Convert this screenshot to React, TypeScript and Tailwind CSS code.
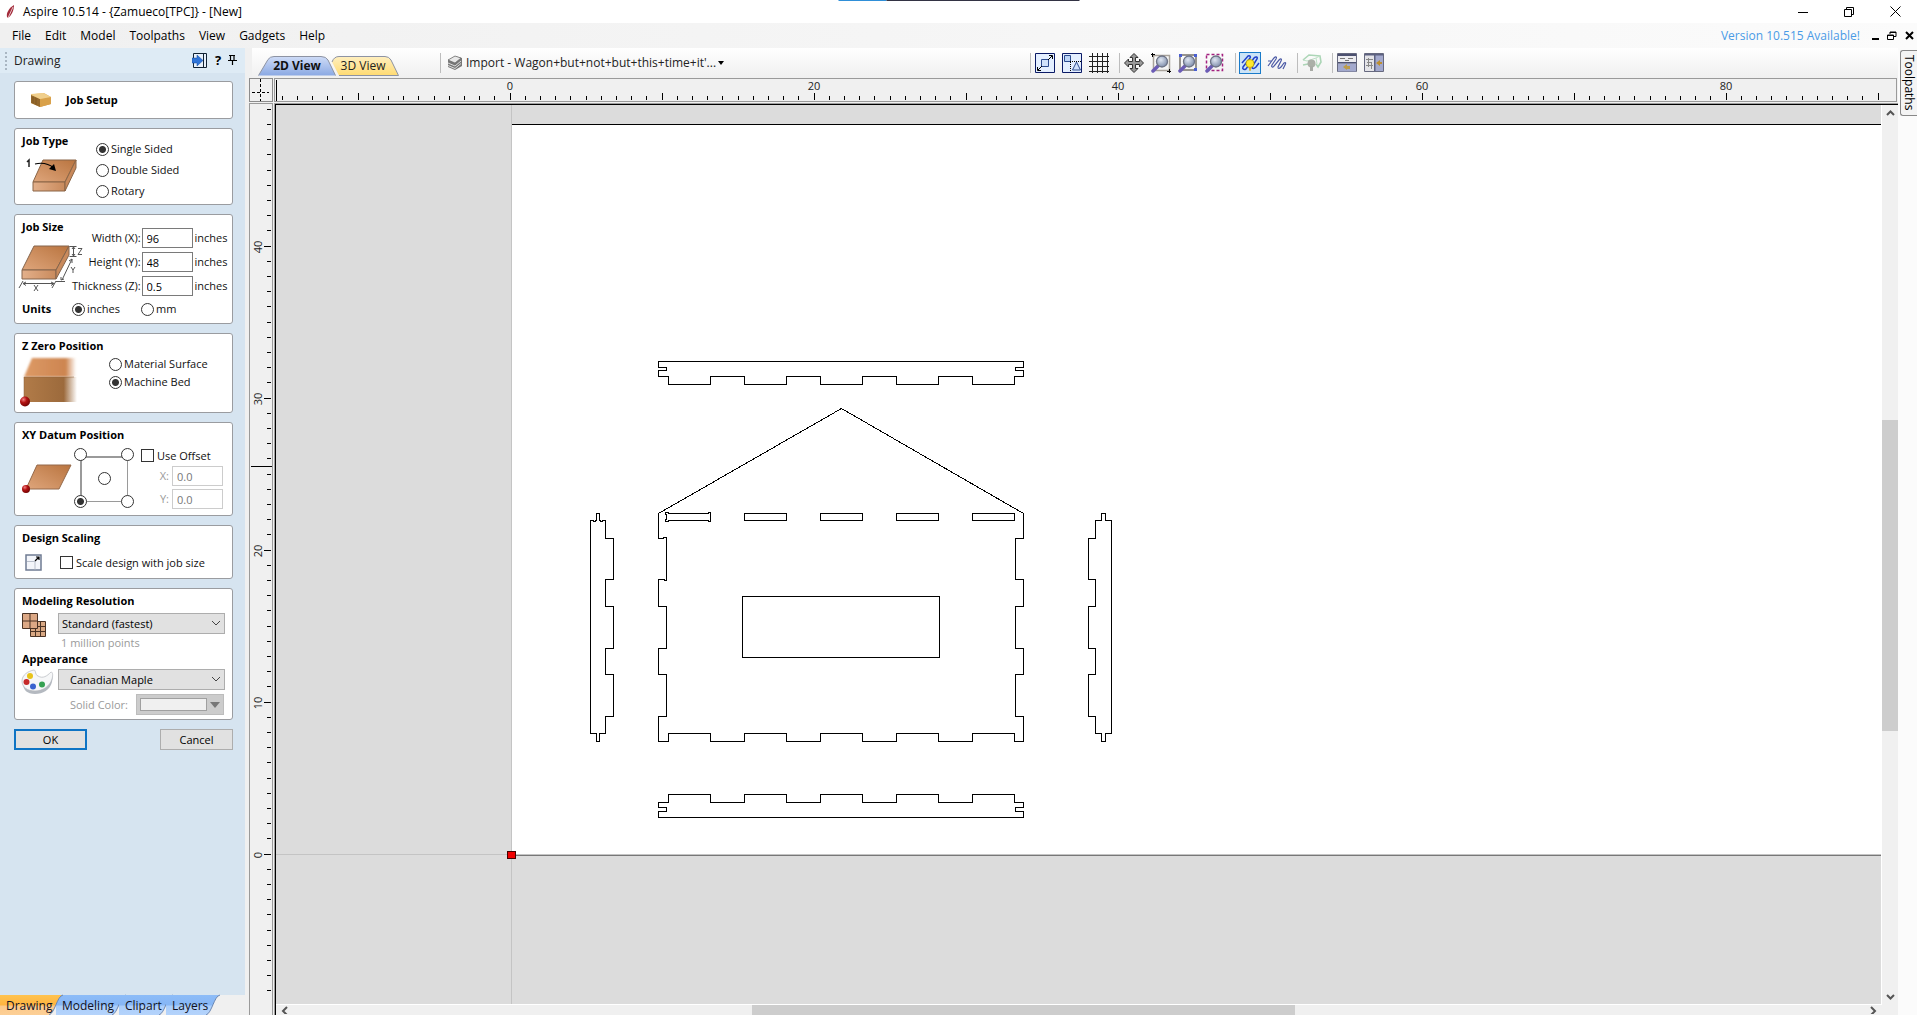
import { useState } from "react";
import type { ReactNode } from "react";

const UNIT = 15.2;
const ORIGIN_X = 236;
const ORIGIN_Y = 751;

/* ---------- small form parts ---------- */

const radioClass =
  "m-0 block size-[13px] shrink-0 appearance-none rounded-full border border-[#333] bg-white checked:bg-[radial-gradient(circle,#333_3px,transparent_4px)]";
const checkClass =
  "m-0 block size-[13px] shrink-0 appearance-none border border-[#333] bg-white checked:bg-[#333]";

function Radio({ name, label, value, group, onPick }: { name: string; label: string; value: string; group: string; onPick: (v: string) => void }) {
  return (
    <label className="flex items-center gap-0.5 whitespace-nowrap">
      <input type="radio" name={name} checked={group === value} onChange={() => onPick(value)} className={radioClass} />
      {label}
    </label>
  );
}

function Card({ className, children }: { className: string; children: ReactNode }) {
  return <section className={"rounded-[3px] border border-[#9a9ca0] bg-white px-[7px] " + className}>{children}</section>;
}

function Title({ children }: { children: ReactNode }) {
  return <h2 className="whitespace-nowrap text-[11px] leading-4 font-bold text-black">{children}</h2>;
}

function SizeRow({ label, value }: { label: string; value: string }) {
  const [v, setV] = useState(value);
  return (
    <div className="flex items-center justify-end">
      <label className="flex items-center gap-px whitespace-nowrap">
        {label}
        <input value={v} onChange={(e) => setV(e.target.value)} className="h-5 w-[51px] border border-[#7a7a7a] bg-white px-1 text-black" />
      </label>
      <span className="ml-0.5 w-8">inches</span>
    </div>
  );
}

function Picker({ label, option, indent }: { label: string; option: string; indent?: boolean }) {
  return (
    <div className="relative flex-1">
      <select aria-label={label} className={"block h-[21px] w-full appearance-none border border-[#adadad] bg-[#e1e1e1] text-black " + (indent ? "pl-[11px]" : "pl-[3px]")}>
        <option>{option}</option>
      </select>
      <svg className="pointer-events-none absolute top-[7px] right-[4px]" width="10" height="7" fill="none" stroke="#444">
        <path d="M1 1l4 4 4-4" />
      </svg>
    </div>
  );
}

/* ---------- panel drawings ---------- */

function WoodDefs() {
  return (
    <svg width="0" height="0" className="absolute">
      <defs>
        <linearGradient id="wood" x1="0" y1="1" x2="1" y2="0">
          <stop offset="0" stopColor="#dfa67c" />
          <stop offset="1" stopColor="#b9743f" />
        </linearGradient>
        <linearGradient id="woodFront">
          <stop offset="0" stopColor="#e3b08b" />
          <stop offset="1" stopColor="#c98a5c" />
        </linearGradient>
        <linearGradient id="beech">
          <stop offset="0" stopColor="#b17b48" />
          <stop offset="0.75" stopColor="#9c6a3c" />
          <stop offset="1" stopColor="#9c6a3c" stopOpacity="0" />
        </linearGradient>
        <linearGradient id="beechTop">
          <stop offset="0" stopColor="#dd9a66" />
          <stop offset="0.8" stopColor="#cd8550" />
          <stop offset="1" stopColor="#cd8550" stopOpacity="0" />
        </linearGradient>
        <radialGradient id="ball" cx="0.35" cy="0.3" r="0.8">
          <stop offset="0" stopColor="#f08080" />
          <stop offset="0.4" stopColor="#b31212" />
          <stop offset="1" stopColor="#600" />
        </radialGradient>
        <linearGradient id="plank" x1="0" y1="0" x2="1" y2="1">
          <stop offset="0" stopColor="#f2cd83" />
          <stop offset="1" stopColor="#cd8f35" />
        </linearGradient>
        <radialGradient id="lens" cx="0.4" cy="0.35" r="0.7">
          <stop offset="0" stopColor="#dfe6f2" />
          <stop offset="1" stopColor="#7b8aa8" />
        </radialGradient>
      </defs>
    </svg>
  );
}

function JobSetupIcon() {
  return (
    <svg width="22" height="16">
      <path d="M1 2l13-1 7 4v7l-11 3-9-4z" fill="url(#plank)" />
      <path d="M1 3l9 4v8l-9-4z" fill="#94682c" />
      <path d="M3 5v6M6 6v7" stroke="#7a5420" strokeWidth="0.700" />
      <path d="M10 7l11-2v7l-11 3z" fill="#d9a14a" />
      <path d="M1 2.500L13 1l8 4-11 2z" fill="#f0cf8c" />
    </svg>
  );
}

function JobTypeIcon() {
  return (
    <svg width="54" height="36">
      <path d="M17 3h33L39 25H7z" fill="url(#wood)" stroke="#8a6546" />
      <path d="M7 25h32v9H7z" fill="url(#woodFront)" stroke="#8a6546" />
      <path d="M50 3v8L39 34v-9z" fill="#c9895b" stroke="#8a6546" />
      <path d="M9 7c8-2 14 0 19 4" fill="none" stroke="#000" strokeWidth="1.2" />
      <path d="M30 14l-7-2 5-5z" fill="#000" />
      <path d="M1 5l2-2v7" fill="none" stroke="#222" strokeWidth="1.500" />
    </svg>
  );
}

function JobSizeIcon() {
  return (
    <svg width="66" height="50" className="-ml-[3px] max-w-none overflow-visible">
      <path d="M15 3h35L37 27H3z" fill="url(#wood)" stroke="#85654c" />
      <path d="M3 27h34v9H3z" fill="url(#woodFront)" stroke="#85654c" />
      <path d="M50 3v9L37 36v-9z" fill="#c98a5c" stroke="#85654c" />
      <g stroke="#555" fill="none">
        <path d="M50.500 3.500h7M50.500 13.500h7M54.500 4v9M53 6l1.500-2 1.500 2M53 11l1.500 2 1.500-2" />
        <path d="M53 16L43 37M50 18l3-2v4M42 34v3l3-1M37 38.500h9" />
        <path d="M4 40.500h31M7 39l-3 1.500 3 2M32 39l3 1.500-3 2M4 38l-4 7M37 38l-4 7" />
        <path d="M59 5.500h4l-4 6h4M52 24l2 3 2-3M54 27v3M15 42l4 6M19 42l-4 6" />
      </g>
    </svg>
  );
}

function ZZeroIcon() {
  return (
    <svg width="60" height="54" className="-ml-[2px]">
      <defs>
        <filter id="soft" x="-10%" y="-20%" width="120%" height="140%">
          <feGaussianBlur stdDeviation="1" />
        </filter>
      </defs>
      <path d="M12 4h44v19H4z" fill="url(#beechTop)" filter="url(#soft)" />
      <path d="M4 23h53v25H4z" fill="url(#beech)" />
      <path d="M4 48V23h50" fill="none" stroke="#8b6038" strokeOpacity="0.5" />
      <circle cx="5" cy="47.500" r="5" fill="url(#ball)" />
    </svg>
  );
}

function DatumIcon() {
  return (
    <svg width="52" height="32">
      <path d="M15 3h34L37 27H4z" fill="url(#wood)" stroke="#94694a" />
      <circle cx="4" cy="27" r="4" fill="url(#ball)" />
    </svg>
  );
}

function ScalingIcon() {
  return (
    <svg width="17" height="17" fill="none">
      <path d="M1 1h15v15H1z" fill="#f3f5fa" stroke="#6f7b92" strokeWidth="1.500" />
      <path d="M2 7.500h8v8" stroke="#b9bfcb" />
      <path d="M10 7l4-4M11 3h3v3" stroke="#000" strokeWidth="1.200" />
    </svg>
  );
}

function ResolutionIcon() {
  return (
    <svg width="26" height="26" stroke="#4a3325">
      <path d="M8.500 8.500h15v15h-15z" fill="#d9a883" />
      <path d="M13.500 8v15M18.500 8v15M8 13.500h15M8 18.500h15" />
      <path d="M.5.5h15v15H.5z" fill="#dca885" />
      <path d="M8 .5v15M.5 8h15" />
    </svg>
  );
}

function PaletteIcon() {
  return (
    <svg width="33" height="26" className="-ml-px">
      <path d="M2 14C2 7 8 3 13 2c2 0 1 5 4 7 5 3 9-1 12-4 3-1 3 4 2 8-2 8-9 12-17 12S2 21 2 14z" fill="#b4b9c0" />
      <path d="M1 12C1 6 7 2 13 1c2 0 1 5 4 6 5 3 9 0 13-4 2 0 2 4 1 7-2 7-9 12-17 12S1 18 1 12z" fill="#f6f7f8" stroke="#b4b8bd" strokeWidth="0.700" />
      <circle cx="9" cy="7" r="3" fill="#e8c31a" />
      <circle cx="5.500" cy="13" r="3" fill="#c62a2a" />
      <circle cx="12" cy="17.500" r="3" fill="#3a63cf" />
      <circle cx="21" cy="15.500" r="3" fill="#35a152" />
    </svg>
  );
}

/* ---------- toolbar drawings ---------- */

function Magnifier() {
  return (
    <g>
      <path d="M8 12l-6 6" stroke="#6b5cb5" strokeWidth="3.500" strokeLinecap="round" />
      <circle cx="11" cy="8.500" r="5.500" fill="url(#lens)" stroke="#6d7385" strokeWidth="1.300" />
    </g>
  );
}

const toolIcons: Record<string, ReactNode> = {
  "Snap to objects": (
    <g fill="none">
      <path d="M.5.5h19v19H.5z" fill="#e4efff" stroke="#0a1a66" />
      <path d="M6.500 6.500h7v7h-7z" fill="#d0e2fb" stroke="#2c4c8f" />
      <path d="M13 7l4-4M14 2.500h3.500V6M7 13l-4 4M2.500 14v3.500H6" stroke="#000" />
    </g>
  ),
  "Smart snapping": (
    <g fill="none">
      <path d="M.5.5h19v19H.5z" fill="#e4efff" stroke="#0a1a66" />
      <path d="M2.500 2.500h6v6h-6z" fill="#bcd4f6" stroke="#2c4c8f" />
      <path d="M14.500 9l-4 8h8z" fill="#cfe0fa" stroke="#2c4c8f" />
      <path d="M8 8.500h11M8.500 9v10" stroke="#000" strokeDasharray="1 1" />
    </g>
  ),
  "Grid": <path d="M3.500 0v20M8.500 0v20M13.500 0v20M18.500 0v20M0 3.500h20M0 8.500h20M0 13.500h20M0 18.500h20" stroke="#222" />,
  "Pan": (
    <path d="M10 .5l4 4h-2.500v4h4V6l4 4-4 4v-2.500h-4v4H14l-4 4-4-4h2.500v-4h-4V14l-4-4 4-4v2.500h4v-4H6z" fill="#999" stroke="#333" />
  ),
  "Zoom box": (
    <g>
      <path d="M2.500 2.500h16v15h-16z" fill="none" stroke="#a8a29a" strokeWidth="1.500" />
      <Magnifier />
      <path d="M0 1.500h4M1.500 0v4M16 18.500h4M18.500 16v4" stroke="#000" />
    </g>
  ),
  "Zoom to drawing": (
    <g>
      <path d="M2 2h16v15H2z" fill="none" stroke="#77736c" strokeWidth="1.500" />
      <path d="M1 1h3v3H1zM16 1h3v3h-3zM16 15h3v3h-3z" fill="#4a5fd0" />
      <Magnifier />
    </g>
  ),
  "Zoom to selection": (
    <g>
      <path d="M1.500 1.500h16v16h-16z" fill="none" stroke="#a3217f" strokeWidth="1.500" strokeDasharray="3 2" />
      <Magnifier />
    </g>
  ),
  "Highlight toolpaths": (
    <g>
      <path d="M2 10L8 3c2-1 3 1 2 2L3 14c-1 2 1 3 3 2L14 5c2-2 4-1 3 1l-5 8c0 2 2 2 4 0l3-4" fill="none" stroke="#1f3fc9" strokeWidth="1.500" />
      <circle cx="10" cy="10.500" r="4" fill="#ffe92e" stroke="#b8a100" strokeWidth="0.800" />
      <path d="M8.500 14h3l-1 4h-1z" fill="#d8a825" />
    </g>
  ),
  "Show toolpaths": (
    <path d="M1 8h4M1 13l6-8c2-2 3-1 2 1l-4 6c-1 2 1 3 2 1l5-6c2-2 3-1 2 1l-3 6c0 2 1 2 3 0l3-4c2-1 2 0 1 2l-2 4" fill="none" stroke="#4b5aa6" strokeWidth="1.200" />
  ),
  "Toggle bulb": (
    <g fill="none" opacity="0.700">
      <path d="M1 7l6-5 11 1 1 6-3 5-2-3M6 11l-5 1z" stroke="#8cc79b" strokeWidth="1.600" />
      <path d="M1 7l4 1 9-3 4-2M14 5l1 6" stroke="#a6d6b1" />
      <circle cx="9.500" cy="10.500" r="4" fill="#8d9388" />
      <path d="M8 13h3v5H8z" fill="#888c84" />
    </g>
  ),
  "Split horizontally": (
    <g fill="none">
      <path d="M.5.5h19v18H.5z" fill="#ececf0" stroke="#66697f" />
      <path d="M1 10.500h18v8H1z" fill="#a3a9cd" />
      <path d="M1 1h18v2H1zM1 9h18v1.500H1z" fill="#4c5170" />
      <path d="M3 5.500h5M11 5.500h5M8 7.500h4" stroke="#777" />
      <path d="M6 14l4-3v2h3v3h-3v1z" fill="#bd9c48" />
    </g>
  ),
  "Split vertically": (
    <g fill="none">
      <path d="M.5.5h19v18H.5z" fill="#e4e4e8" stroke="#66697f" />
      <path d="M11 1h8v17h-8z" fill="#a3a9cd" />
      <path d="M1 1h18v1.500H1zM10 1h1.500v17H10z" fill="#5c6180" />
      <path d="M2 6.500h7M3 9.500h5M2 12.500h7M4.500 5v9M7.500 9v7" stroke="#888" />
      <path d="M12 10l4-3v2h2v2h-2v2z" fill="#bd8f30" />
    </g>
  ),
};

const toolGroups = [
  ["Snap to objects", "Smart snapping", "Grid"],
  ["Pan", "Zoom box", "Zoom to drawing", "Zoom to selection"],
  ["Highlight toolpaths", "Show toolpaths"],
  ["Toggle bulb"],
  ["Split horizontally", "Split vertically"],
];

function Tools() {
  return (
    <div className="flex items-center">
      {toolGroups.map((group, i) => (
        <div key={i} className="flex items-center gap-[7px] border-l border-[#bdbdbd] pr-2.5 pl-1">
          {group.map((name) => (
            <button
              key={name}
              aria-label={name}
              title={name}
              className={
                "flex size-5 items-center justify-center " +
                (name === "Highlight toolpaths" ? "bg-[#cce4f7] outline outline-[#1a7bc9]" : "")
              }
            >
              <svg width="20" height="20">{toolIcons[name]}</svg>
            </button>
          ))}
        </div>
      ))}
    </div>
  );
}

/* ---------- rulers ---------- */

function range(from: number, to: number) {
  return Array.from({ length: to - from + 1 }, (_, i) => from + i);
}

function TopRuler() {
  return (
    <svg className="block size-full" shapeRendering="crispEdges">
      <path d="M1.500 1v21" stroke="#000" />
      {range(-15, 90).map((n) => {
        const x = Math.floor(ORIGIN_X - 1 + n * UNIT) + 0.5;
        return <path key={n} d={`M${x} ${n % 10 === 0 ? 14 : 17}V21`} stroke="#000" />;
      })}
      {[0, 20, 40, 60, 80].map((n) => (
        <text key={n} x={ORIGIN_X - 1 + n * UNIT} y="11" textAnchor="middle" fontSize="11" fill="#222">{n}</text>
      ))}
    </svg>
  );
}

function SideRuler() {
  return (
    <svg className="block size-full" shapeRendering="crispEdges">
      {range(-9, 49).map((n) => {
        const y = Math.floor(ORIGIN_Y - n * UNIT) - 0.5;
        return <path key={n} d={`M${n % 10 === 0 ? 14 : 17} ${y}H21`} stroke="#000" />;
      })}
      <path d="M1 362.500h22" stroke="#000" />
      {[0, 10, 20, 30, 40].map((n) => {
        const y = ORIGIN_Y - n * UNIT;
        return (
          <text key={n} x="12" y={y} transform={`rotate(-90 12 ${y})`} textAnchor="middle" fontSize="11" fill="#222">{n}</text>
        );
      })}
    </svg>
  );
}

/* ---------- drawing area; paths are in window pixels ---------- */

const topBar =
  "M658 361H1023V367H1015V370H1023V376H1014V384H972V376H938V384H896V376H862V384H820V376H786V384H744V376H710V384H668V376H658V370H666V367H658Z";
const house =
  "M841 408L1023 513V538H1015V579H1023V606H1015V648H1023V674H1015V716H1023V741H1014V733H972V741H938V733H896V741H862V733H820V741H786V733H744V741H710V733H668V741H658V716H666V674H658V648H666V606H658V579H664V580H666V537H663V538H658V513Z";
const bottomBar =
  "M658 817H1023V811H1015V807H1023V802H1014V794H972V802H938V794H896V802H862V794H820V802H786V794H744V802H710V794H668V802H658V807H666V811H658Z";
const leftSide =
  "M590 520H593V521H595V520H596V513H599V520H600V521H602V520H605V538H613V579H605V606H613V648H605V674H613V716H605V733H599V741H596V733H590Z";
const rightSide =
  "M1111 520H1105V513H1101V520H1095V538H1088V579H1095V606H1088V648H1095V674H1088V716H1095V733H1101V741H1105V733H1111Z";

function Artboard() {
  return (
    <svg className="block size-full bg-[#dcdcdc]" fill="none" stroke="#000">
      <g transform="translate(-275.500 -104.500)" shapeRendering="crispEdges">
        <path d="M511 124H4000V855H511z" fill="#fff" stroke="none" />
        <path d="M511 100V1400M270 854H4000" stroke="#c4c4c4" />
        <path d="M511 124H4000" />
        <path d="M511 855H4000" stroke="#777" />
        <path d={topBar} />
        <path d={house} />
        <path d={bottomBar} />
        <path d={leftSide} />
        <path d={rightSide} />
        <path d="M742 596H939V657H742Z" />
        <path d="M665 514V512H668V513H708V512H710V521H708V520H668V521H665V519H666V514Z" />
        <path d="M744 513H786V520H744ZM820 513H862V520H820ZM896 513H938V520H896ZM972 513H1014V520H972Z" />
        <path d="M507 851h8v7h-8z" fill="#f00000" stroke="#400" />
      </g>
    </svg>
  );
}

function Chevron({ d }: { d: string }) {
  return (
    <svg className="shrink-0" width="9" height="9" fill="none" stroke="#555" strokeWidth="2">
      <path d={d} />
    </svg>
  );
}

/* ---------- left panel ---------- */

function JobPanel() {
  const [side, setSide] = useState("single");
  const [units, setUnits] = useState("inches");
  const [zero, setZero] = useState("bed");
  const [datum, setDatum] = useState("bl");
  const corner = (v: string, label: string, place: string) => (
    <input type="radio" name="datum" aria-label={label} checked={datum === v} onChange={() => setDatum(v)} className={radioClass + " " + place} />
  );
  return (
    <form onSubmit={(e) => e.preventDefault()} className="flex flex-col gap-[9px] pt-2 pr-3 pl-3.5 text-[11px] leading-4 text-[#111]">
      <Card className="flex h-[38px] items-center">
        <span className="ml-2"><JobSetupIcon /></span>
        <h1 className="ml-3.5 text-[11px] font-bold text-black">Job Setup</h1>
      </Card>

      <Card className="flex h-[77px]">
        <div className="w-[74px] pt-1">
          <Title>Job Type</Title>
          <div className="mt-2 ml-1"><JobTypeIcon /></div>
        </div>
        <div className="grid content-start gap-[5px] pt-3">
          <Radio name="side" label="Single Sided" value="single" group={side} onPick={setSide} />
          <Radio name="side" label="Double Sided" value="double" group={side} onPick={setSide} />
          <Radio name="side" label="Rotary" value="rotary" group={side} onPick={setSide} />
        </div>
      </Card>

      <Card className="h-[110px]">
        <div className="flex">
          <div className="w-[50px] shrink-0 pt-1">
            <Title>Job Size</Title>
            <div className="mt-2"><JobSizeIcon /></div>
          </div>
          <div className="flex flex-1 flex-col gap-1 pt-[13px]">
            <SizeRow label="Width (X):" value="96" />
            <SizeRow label="Height (Y):" value="48" />
            <SizeRow label="Thickness (Z):" value="0.5" />
          </div>
        </div>
        <div className="mt-1 flex h-[18px] items-center">
          <div className="w-[50px]"><Title>Units</Title></div>
          <div className="w-[69px]"><Radio name="units" label="inches" value="inches" group={units} onPick={setUnits} /></div>
          <Radio name="units" label="mm" value="mm" group={units} onPick={setUnits} />
        </div>
      </Card>

      <Card className="h-20 pt-1">
        <Title>Z Zero Position</Title>
        <div className="flex">
          <div className="w-[87px]"><ZZeroIcon /></div>
          <div className="grid content-start gap-0.5 pt-0.5">
            <Radio name="zero" label="Material Surface" value="surface" group={zero} onPick={setZero} />
            <Radio name="zero" label="Machine Bed" value="bed" group={zero} onPick={setZero} />
          </div>
        </div>
      </Card>

      <Card className="h-[94px] pt-1">
        <Title>XY Datum Position</Title>
        <div className="mt-[5px] flex">
          <div className="w-[52px] pt-3.5"><DatumIcon /></div>
          <div className="relative h-[60px] w-[60px]">
            <svg className="absolute inset-0" width="60" height="60" fill="none" stroke="#9a9a9a">
              <path d="M7 9h46M7 9v44" strokeWidth="2" />
              <path d="M53.500 9v44.500H7" />
            </svg>
            <div className="relative grid h-[60px] w-[60px] grid-cols-3 grid-rows-3">
              {corner("tl", "Top left", "col-start-1 row-start-1")}
              {corner("tr", "Top right", "col-start-3 row-start-1 justify-self-end")}
              {corner("c", "Centre", "col-start-2 row-start-2 place-self-center")}
              {corner("bl", "Bottom left", "col-start-1 row-start-3 self-end")}
              {corner("br", "Bottom right", "col-start-3 row-start-3 place-self-end")}
            </div>
          </div>
          <div className="ml-[7px] flex-1">
            <label className="flex h-[15px] items-center gap-[3px] whitespace-nowrap">
              <input type="checkbox" className={checkClass} />
              Use Offset
            </label>
            <label className="mt-[3px] flex items-center justify-end gap-[3px] pr-0.5 text-[#9a9a9a]">
              X:
              <input disabled defaultValue="0.0" className="h-5 w-[51px] border border-[#ccc] px-1 text-[#777]" />
            </label>
            <label className="mt-[3px] flex items-center justify-end gap-[3px] pr-0.5 text-[#9a9a9a]">
              Y:
              <input disabled defaultValue="0.0" className="h-5 w-[51px] border border-[#ccc] px-1 text-[#777]" />
            </label>
          </div>
        </div>
      </Card>

      <Card className="h-[54px] pt-1">
        <Title>Design Scaling</Title>
        <div className="mt-2 ml-[3px] flex items-center">
          <ScalingIcon />
          <label className="ml-[18px] flex items-center gap-[3px] whitespace-nowrap">
            <input type="checkbox" className={checkClass} />
            Scale design with job size
          </label>
        </div>
      </Card>

      <Card className="h-[132px] pt-1">
        <Title>Modeling Resolution</Title>
        <div className="mt-1 flex h-[21px]">
          <div className="w-9 shrink-0"><ResolutionIcon /></div>
          <Picker label="Modeling resolution" option="Standard (fastest)" />
        </div>
        <p className="mt-px ml-[39px] text-[#9a9a9a]">1 million points</p>
        <Title>Appearance</Title>
        <div className="mt-0.5 flex h-[21px]">
          <div className="w-9 shrink-0"><PaletteIcon /></div>
          <Picker label="Appearance" option="Canadian Maple" indent />
        </div>
        <div className="mt-1 flex items-center justify-end gap-2 pr-px text-[#9a9a9a]">
          <span>Solid Color:</span>
          <button type="button" disabled aria-label="Solid color" className="flex h-[21px] w-[88px] items-center justify-between border border-[#bdbdbd] bg-[#ccc] px-[3px]">
            <span className="h-[13px] w-[67px] border border-[#a0a0a0] bg-[#f0f0f0]" />
            <svg width="10" height="6"><path d="M0 0h10l-5 6z" fill="#777" /></svg>
          </button>
        </div>
      </Card>

      <div className="flex justify-between text-black">
        <button type="submit" className="h-[21px] w-[73px] border-2 border-[#0f74c4] bg-[#e1e1e1] leading-none">OK</button>
        <button type="button" className="h-[21px] w-[73px] border border-[#adadad] bg-[#e1e1e1] leading-none">Cancel</button>
      </div>
    </form>
  );
}

const bottomTabs = [
  { name: "Drawing", cls: "w-[56px] pl-1.5", w: 63, on: true },
  { name: "Modeling", cls: "w-[63px] pl-1.5", w: 70, on: false },
  { name: "Clipart", cls: "w-[47px] pl-1.5", w: 54, on: false },
  { name: "Layers", cls: "w-[54px] pl-1.5", w: 54, on: false },
];

function BottomTabs() {
  return (
    <div className="flex h-5 shrink-0 bg-[#f0f0f0] text-xs">
      {bottomTabs.map((t) => (
        <button key={t.name} className={"relative pt-0.5 text-left whitespace-nowrap text-[#112] " + t.cls + (t.on ? " z-10" : "")}>
          <svg className="absolute top-0 left-0 max-w-none overflow-visible" width={t.w} height="20">
            <defs>
              <linearGradient id={"tab" + t.name} x1="0" y1="0" x2="0" y2="1">
                <stop offset="0" stopColor={t.on ? "#ffc34f" : "#8dbcf8"} />
                <stop offset="0.5" stopColor={t.on ? "#ffb440" : "#86b6f5"} />
                <stop offset="0.550" stopColor={t.on ? "#fdc98a" : "#abcefb"} />
                <stop offset="1" stopColor={t.on ? "#fccf96" : "#b4d3fb"} />
              </linearGradient>
            </defs>
            <path d={`M0 0H${t.w}C${t.w - 6} 1 ${t.w - 8} 18 ${t.w - 14} 20H0z`} fill={`url(#tab${t.name})`} />
            <path d={`M${t.w} 0C${t.w - 6} 1 ${t.w - 8} 18 ${t.w - 14} 20`} fill="none" stroke="#6b87b3" />
          </svg>
          <span className="relative">{t.name}</span>
        </button>
      ))}
    </div>
  );
}

function ViewTab({ label, active }: { label: string; active?: boolean }) {
  return (
    <button className={"relative h-5 text-xs " + (active ? "z-10 w-[78px] font-bold text-[#111]" : "-ml-[5px] w-[68px] pr-1 text-[#222]")}>
      <svg className="absolute inset-0" width="100%" height="20" viewBox={active ? "0 0 78 20" : "0 0 68 20"}>
        <defs>
          <linearGradient id={active ? "blueTab" : "goldTab"} x1="0" y1="0" x2="0" y2="1">
            <stop offset="0" stopColor={active ? "#cfdcf7" : "#ffefc0"} />
            <stop offset="1" stopColor={active ? "#8ba9e3" : "#ffdb72"} />
          </linearGradient>
        </defs>
        <path
          d={active ? "M.5 19.500L10 3.500Q12 .5 16 .5H63Q68 .5 70 4L77.500 19.500" : "M1 6Q3 .5 8 .5H54Q58 .5 60 4L67.500 19.500H8"}
          fill={active ? "url(#blueTab)" : "url(#goldTab)"}
          stroke="#8d93a3"
        />
      </svg>
      <span className="relative">{label}</span>
    </button>
  );
}

export default function App() {
  return (
    <div className="flex h-screen flex-col overflow-hidden bg-[#f0f0f0] font-['Open_Sans','Noto_Sans',sans-serif] text-black">
      <WoodDefs />
      <header className="relative flex h-[23px] shrink-0 items-center bg-white pr-4 pl-[6px] text-xs">
        <div className="absolute top-0 left-1/2 flex h-px w-[241px] -translate-x-1/2">
          <span className="w-12 bg-[#2f8fd8]" />
          <span className="flex-1 bg-[#334]" />
        </div>
        <svg width="9" height="14"><path d="M8 0C3 3 0 8 1 12l1 1C5 11 8 6 8 0z" fill="#a32a3a" /><path d="M7 2L2 13" stroke="#fff" strokeWidth="0.700" /></svg>
        <span className="ml-2 whitespace-nowrap">Aspire 10.514 - {"{Zamueco[TPC]}"} - [New]</span>
        <div className="ml-auto flex items-center gap-9">
          <button aria-label="Minimize"><svg width="10" height="10" stroke="#000"><path d="M0 5.500h10" /></svg></button>
          <button aria-label="Restore"><svg width="10" height="10" fill="none" stroke="#000"><path d="M.5 2.500h7v7h-7zM2.500 2V.5h7v7H8" /></svg></button>
          <button aria-label="Close"><svg width="11" height="11" stroke="#000"><path d="M.5.5l10 10M10.500.5l-10 10" /></svg></button>
        </div>
      </header>

      <nav className="flex h-[25px] shrink-0 items-center bg-linear-to-r from-[#f0f0f0] to-[#fbfbfb] pr-[3px] pl-3 text-xs">
        <div className="flex gap-3.5">
          {["File", "Edit", "Model", "Toolpaths", "View", "Gadgets", "Help"].map((m) => (
            <button key={m}>{m}</button>
          ))}
        </div>
        <a href="#update" className="ml-auto text-[#4a9be6]">Version 10.515 Available!</a>
        <div className="ml-3 flex items-center gap-2">
          <button aria-label="Minimize view"><svg width="7" height="9"><path d="M0 7h7v2H0z" /></svg></button>
          <button aria-label="Restore view"><svg width="10" height="9" fill="none" stroke="#000"><path d="M.5 4h6v4.500h-6zM.5 4.500h6M3 3V1h6v4.500H7M3 1.500h6" /></svg></button>
          <button aria-label="Close view"><svg width="9" height="9" stroke="#000" strokeWidth="2"><path d="M1 1l7 7M8 1L1 8" /></svg></button>
        </div>
      </nav>

      <div className="flex min-h-0 flex-1">
        <aside className="flex w-[245px] shrink-0 flex-col bg-[#d6e4f0]">
          <div className="flex h-[25px] shrink-0 items-center bg-[#deebf5] pr-2 pl-[5px] text-xs text-[#222]">
            <span className="h-[18px] border-l-2 border-dotted border-[#a9b6c2]" />
            <span className="ml-[7px]">Drawing</span>
            <div className="ml-auto flex items-center gap-1">
              <button aria-label="Switch layout">
                <svg width="16" height="15">
                  <path d="M1.500.5h13v14h-13z" fill="#e8f1fb" stroke="#123" />
                  <path d="M11.500 0v15" stroke="#123" />
                  <path d="M0 5h5V2l6 5.500L5 13v-3H0z" fill="#2f74d8" stroke="#174a9a" strokeWidth="0.500" />
                </svg>
              </button>
              <button className="w-3 text-[13px] font-bold text-black">?</button>
              <button aria-label="Pin">
                <svg width="9" height="10" fill="none" stroke="#000"><path d="M2.500 0v5M1 .5h6M6 0v5.500M0 5.500h9M4.500 6v4" strokeWidth="1.200" /></svg>
              </button>
            </div>
          </div>
          <div className="min-h-0 flex-1 overflow-hidden"><JobPanel /></div>
          <BottomTabs />
        </aside>

        <main className="ml-1 flex min-w-0 flex-1 flex-col">
          <div className="ml-[3px] flex h-[30px] shrink-0 items-center bg-linear-to-b from-white to-[#f0f0f0]">
            <div className="ml-1.5 flex self-end pb-0.5">
              <ViewTab label="2D View" active />
              <ViewTab label="3D View" />
            </div>
            <button className="ml-[41px] flex h-5 w-[590px] items-center border-l border-[#bdbdbd] text-xs whitespace-nowrap text-[#222]">
              <svg className="ml-1.5" width="16" height="16">
                <path d="M1 5l7-4 7 2v8l-7 4-7-3z" fill="#777" />
                <path d="M1 5l7-4 6 2-6 5z" fill="#e8e8e8" stroke="#666" strokeWidth="0.700" />
                <path d="M1 8l7 3 6-5M1 10.500l7 3 6-5" fill="none" stroke="#ddd" />
              </svg>
              <span className="ml-[3px]">Import - Wagon+but+not+but+this+time+it'...</span>
              <svg className="ml-0.5" width="6" height="4"><path d="M0 0h6L3 4z" /></svg>
            </button>
            <Tools />
          </div>

          <div className="flex h-6 shrink-0 gap-px pr-px">
            <div className="w-6 shrink-0 border border-[#8c8c8c]">
              <svg width="22" height="22" stroke="#000"><path d="M10.500 0v22M2 13.500h17" strokeDasharray="3 2" /></svg>
            </div>
            <div className="min-w-0 flex-1 border border-[#9a9a9a]"><TopRuler /></div>
          </div>

          <div className="mt-px flex min-h-0 flex-1 gap-px bg-[#f0f0f0]">
            <div className="w-6 shrink-0 border border-b-0 border-[#9a9a9a]"><SideRuler /></div>
            <div className="flex min-w-0 flex-1 flex-col border-t border-l border-[#a0a0a0]">
              <div className="flex min-h-0 flex-1 flex-col border-t border-l border-black">
                <div className="flex min-h-0 flex-1">
                  <div className="min-w-0 flex-1 border-r border-b border-white"><Artboard /></div>
                  <div className="flex w-4 shrink-0 flex-col items-center py-1">
                    <Chevron d="M1 6l3.500-3.500L8 6" />
                    <div className="grow-[301]" />
                    <div className="w-full grow-[309] bg-[#cdcdcd]" />
                    <div className="grow-[260]" />
                    <Chevron d="M1 3l3.500 3.500L8 3" />
                  </div>
                </div>
                <div className="flex h-[10px] shrink-0 items-start pr-5 pl-1">
                  <Chevron d="M7 2L3 6l4 4" />
                  <div className="grow-[463]" />
                  <div className="h-full grow-[543] bg-[#cdcdcd]" />
                  <div className="grow-[574]" />
                  <Chevron d="M2 2l4 4-4 4" />
                </div>
              </div>
            </div>
          </div>
        </main>

        <div className="w-[19px] shrink-0 bg-[#fbfbfb] pt-0.5 pl-0.5">
          <button className="flex h-[66px] w-[17px] items-center justify-center rounded-l-[3px] border border-r-0 border-[#888] bg-[#f4f4f4] text-xs leading-none [writing-mode:vertical-rl]">
            Toolpaths
          </button>
        </div>
      </div>
    </div>
  );
}
